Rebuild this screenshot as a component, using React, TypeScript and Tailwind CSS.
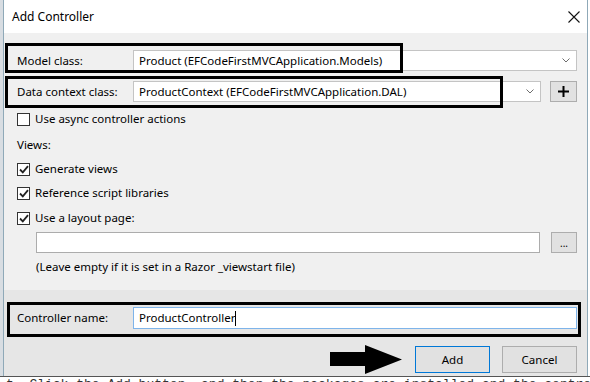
import React from "react";

const Chevron = () => (
  <svg width="8" height="5" viewBox="0 0 8 5" className="shrink-0">
    <path d="M0.5 0.5 L4 4 L7.5 0.5" fill="none" stroke="#6d6d6d" strokeWidth="1" />
  </svg>
);

const Check = ({ checked }: { checked: boolean }) => (
  <div className="w-[13px] h-[13px] border border-[#333333] bg-white flex items-center justify-center shrink-0">
    {checked && (
      <svg width="10" height="9" viewBox="0 0 10 9">
        <path d="M1 4.5 L3.8 7.3 L9 1.2" fill="none" stroke="#222" strokeWidth="1.8" />
      </svg>
    )}
  </div>
);

export default function App() {
  return (
    <div
      className="relative w-[590px] h-[382px] overflow-hidden bg-white text-[11.5px] text-black"
      style={{ fontFamily: '"Noto Sans", "Open Sans", sans-serif' }}
    >
      <div className="flex h-full">
        <div className="w-[3px] h-full bg-[#d8dde2] shrink-0" />
        <div className="flex flex-col w-[585px] h-[376px] border-x border-[#8fa9b8] shrink-0">
          {/* title */}
          <div className="h-[33px] bg-white flex items-center justify-between pl-[8px] pr-[7px] shrink-0">
            <span className="text-[12px] text-black">Add Controller</span>
            <svg width="12" height="12" viewBox="0 0 12 12">
              <path d="M0.5 0.5 L11.5 11.5 M11.5 0.5 L0.5 11.5" stroke="#111" strokeWidth="1.1" />
            </svg>
          </div>
          {/* body */}
          <div className="h-[257px] bg-[#f0f0f0] pl-[12px] pr-[10px] pt-[17px] flex flex-col shrink-0">
            <div className="flex items-center h-[21px]">
              <span className="w-[117px] shrink-0 pl-[1px]">Model class:</span>
              <div className="flex-1 h-[21px] bg-white border border-[#c4c4c4] flex items-center justify-between pl-[5px] pr-[6px]">
                <span>Product (EFCodeFirstMVCApplication.Models)</span>
                <Chevron />
              </div>
            </div>
            <div className="flex items-center h-[21px] mt-[10px]">
              <span className="w-[117px] shrink-0 pl-[1px]">Data context class:</span>
              <div className="flex-1 h-[21px] bg-white border border-[#c4c4c4] flex items-center justify-between pl-[5px] pr-[6px]">
                <span>ProductContext (EFCodeFirstMVCApplication.DAL)</span>
                <Chevron />
              </div>
              <div className="ml-[9px] w-[27px] h-[21px] bg-[#e1e1e1] border border-[#adadad] flex items-center justify-center shrink-0">
                <svg width="11" height="11" viewBox="0 0 11 11">
                  <path d="M5.5 0 V11 M0 5.5 H11" stroke="#000" strokeWidth="2" />
                </svg>
              </div>
            </div>
            <div className="flex items-center h-[20px] mt-[7px] pl-[1px] gap-[5px]">
              <Check checked={false} />
              <span>Use async controller actions</span>
            </div>
            <div className="flex items-center h-[20px] mt-[6px] pl-[1px]">
              <span>Views:</span>
            </div>
            <div className="flex items-center h-[20px] mt-[4px] pl-[1px] gap-[5px]">
              <Check checked />
              <span>Generate views</span>
            </div>
            <div className="flex items-center h-[20px] mt-[4px] pl-[1px] gap-[5px]">
              <Check checked />
              <span>Reference script libraries</span>
            </div>
            <div className="flex items-center h-[20px] mt-[5px] pl-[1px] gap-[5px]">
              <Check checked />
              <span>Use a layout page:</span>
            </div>
            <div className="flex items-center h-[21px] mt-[4px] pl-[20px]">
              <div className="flex-1 h-[21px] bg-white border border-[#acacac]" />
              <div className="ml-[11px] w-[26px] h-[21px] bg-[#e1e1e1] border border-[#adadad] flex items-end justify-center pb-[4px] shrink-0">
                <span className="text-[10px] leading-none">...</span>
              </div>
            </div>
            <div className="flex items-center h-[20px] mt-[4px] pl-[20px]">
              <span>(Leave empty if it is set in a Razor _viewstart file)</span>
            </div>
          </div>
          {/* footer */}
          <div className="flex-1 bg-[#e6e6e6] pl-[12px] pr-[10px] pt-[17px] flex flex-col">
            <div className="flex items-center h-[22px]">
              <span className="w-[117px] shrink-0 pl-[1px]">Controller name:</span>
              <div className="flex-1 h-[22px] bg-white border border-[#7eb4ea] flex items-center pl-[5px]">
                <span>ProductController</span>
                <span className="w-px h-[15px] bg-black" />
              </div>
            </div>
            <div className="flex items-center justify-end mt-[16px] gap-[12px]">
              <svg width="72" height="29" viewBox="0 0 72 29" className="mr-[1px]">
                <polygon points="0,7 35,7 35,0 72,14.5 35,29 35,21 0,21" fill="#000" />
              </svg>
              <div className="w-[75px] h-[27px] bg-[#e1e1e1] border border-[#0078d7] flex items-center justify-center">
                Add
              </div>
              <div className="w-[75px] h-[27px] bg-[#e1e1e1] border border-[#adadad] flex items-center justify-center">
                Cancel
              </div>
            </div>
          </div>
        </div>
      </div>
      {/* background page text below the dialog */}
      <div
        className="absolute left-0 top-[376px] w-[590px] h-[6px] overflow-hidden bg-white border-t border-[#555]"
        style={{ fontFamily: '"Liberation Mono", monospace' }}
      >
        <div className="text-[13px] leading-[13px] text-[#333] whitespace-nowrap pl-[6px] pt-[1px]">
          t. Click the Add button, and then the packages are installed and the controller dependencies
        </div>
      </div>

      {/* annotation boxes */}
      <div className="absolute left-[5px] top-[43px] w-[398px] h-[30px] border-[3px] border-black" />
      <div className="absolute left-[5px] top-[76px] w-[498px] h-[32px] border-[3px] border-black" />
      <div className="absolute left-[7px] top-[302px] w-[574px] h-[35px] border-[3px] border-black" />
    </div>
  );
}
